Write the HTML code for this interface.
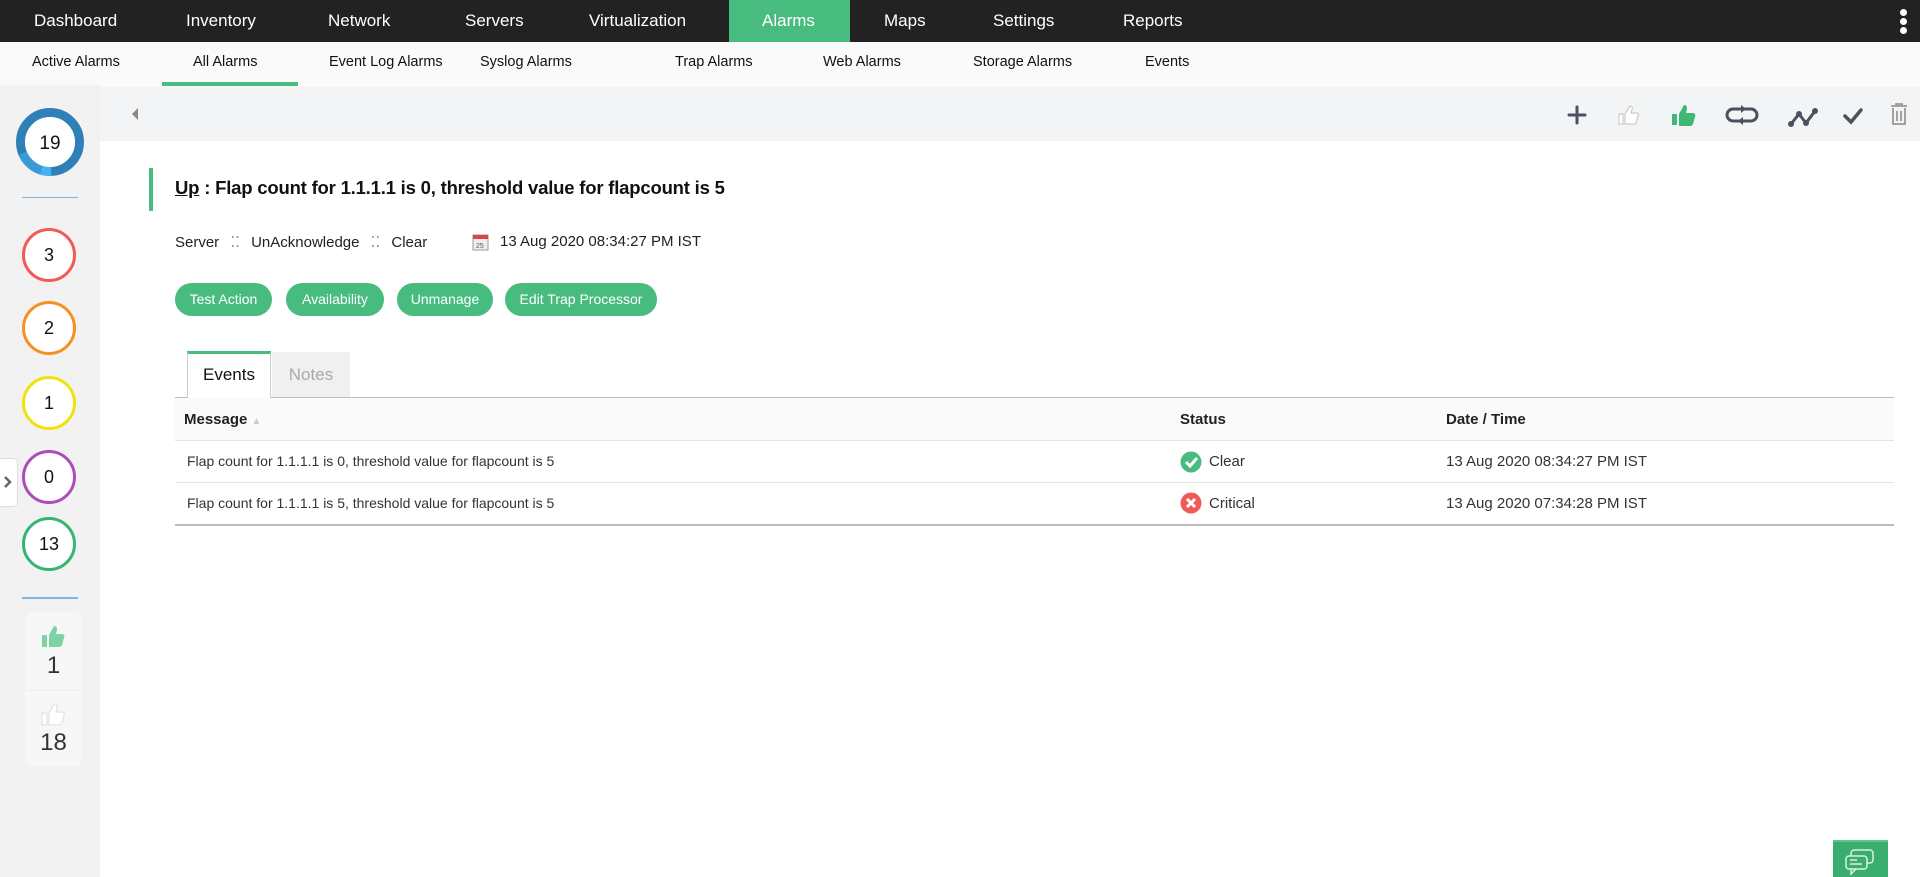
<!DOCTYPE html>
<html><head><meta charset="utf-8"><style>
*{margin:0;padding:0;box-sizing:border-box}
body{width:1920px;height:877px;overflow:hidden;font-family:"Liberation Sans",sans-serif;background:#fff;position:relative;color:#222}
.a{position:absolute;white-space:nowrap}
.top{left:0;top:0;width:1920px;height:42px;background:#222}
.tn{top:0;height:42px;line-height:42px;color:#fff;font-size:17px}
.sub{left:0;top:42px;width:1920px;height:43px;background:#fafafa}
.sn{top:42px;line-height:40px;font-size:14.5px;color:#111}
.side{left:0;top:85px;width:100px;height:792px;background:#f2f2f2}
.c{width:54px;height:54px;border-radius:50%;border:3px solid;background:#fff;text-align:center;line-height:48px;font-size:18px;left:22px;color:#111}
.btn{top:283px;height:33px;line-height:33px;background:#48bb7e;color:#fff;border-radius:17px;font-size:14px;text-align:center}
.th{font-weight:bold;font-size:15px;top:398px;line-height:43px;color:#222}
.td{font-size:14px;line-height:41px;color:#333}
</style></head><body>
<div class="a top"></div>
<div class="a" style="left:729px;top:0;width:121px;height:42px;background:#48bb7e"></div>
<div class="a tn" style="left:34px">Dashboard</div>
<div class="a tn" style="left:186px">Inventory</div>
<div class="a tn" style="left:328px">Network</div>
<div class="a tn" style="left:465px">Servers</div>
<div class="a tn" style="left:589px">Virtualization</div>
<div class="a tn" style="left:762px">Alarms</div>
<div class="a tn" style="left:884px">Maps</div>
<div class="a tn" style="left:993px">Settings</div>
<div class="a tn" style="left:1123px">Reports</div>
<div class="a" style="left:1900px;top:9px;width:7px;height:7px;border-radius:50%;background:#fff"></div>
<div class="a" style="left:1900px;top:18px;width:7px;height:7px;border-radius:50%;background:#fff"></div>
<div class="a" style="left:1900px;top:27px;width:7px;height:7px;border-radius:50%;background:#fff"></div>

<div class="a sub"></div>
<div class="a sn" style="left:32px">Active Alarms</div>
<div class="a sn" style="left:193px">All Alarms</div>
<div class="a" style="left:162px;top:82px;width:136px;height:4px;background:#48bb7e"></div>
<div class="a sn" style="left:329px">Event Log Alarms</div>
<div class="a sn" style="left:480px">Syslog Alarms</div>
<div class="a sn" style="left:675px">Trap Alarms</div>
<div class="a sn" style="left:823px">Web Alarms</div>
<div class="a sn" style="left:973px">Storage Alarms</div>
<div class="a sn" style="left:1145px">Events</div>

<div class="a" style="left:100px;top:86px;width:1820px;height:55px;background:#f3f4f5"></div>
<div class="a" style="left:132px;top:108px;width:0;height:0;border-top:6px solid transparent;border-bottom:6px solid transparent;border-right:6px solid #888"></div>

<svg class="a" style="left:1560px;top:98px" width="360" height="34" viewBox="1560 98 360 34">
<g stroke="#4a5260" stroke-width="3" fill="none" stroke-linecap="round">
<path d="M1577 107v16M1569 115h16"/>
<path d="M1742 109h9a6 6 0 0 1 0 12h-13M1742 121h-9a6 6 0 0 1 0-12h13"/>
<path d="M1791 124l8-10 7 9 9-12"/>
<path d="M1845 116l6 6 10-12" stroke-width="3.5"/>
</g>
<path d="M1741 105l5 4-5 4zM1743 125l-5-4 5-4z" fill="#4a5260"/>
<g fill="#4a5260"><circle cx="1791" cy="124" r="3"/><circle cx="1799" cy="114" r="3"/><circle cx="1806" cy="123" r="3"/><circle cx="1815" cy="111" r="3"/></g>
<path d="M1619 114h4v10h-4zM1625 114l5-8c2 0 3 1 2 4l-1 3h6c2 0 2 2 1 3l-2 7c0 1-1 1-2 1h-9z" fill="#fff" stroke="#ccc" stroke-width="1.2"/>
<path d="M1672 114h5v11h-5zM1679 114l5-9c3 0 3 2 3 4l-1 4h7c2 0 3 2 2 4l-2 7c-1 1-1 2-3 2h-11z" fill="#3fb873"/>
<g stroke="#999" stroke-width="1.8" fill="none"><path d="M1891 106h16M1896 106v-2h6v2M1893 108v16h12v-16M1897 111v10M1901 111v10"/></g>
</svg>

<div class="a side"></div>
<svg class="a" style="left:15px;top:107px" width="70" height="70" viewBox="0 0 70 70">
<circle cx="35" cy="35" r="29.5" fill="none" stroke="#2f80b6" stroke-width="9"/>
<circle cx="35" cy="35" r="29.5" fill="none" stroke="#3a9ad8" stroke-width="9" stroke-dasharray="26 300" stroke-dashoffset="-55"/>
<circle cx="35" cy="35" r="29.5" fill="none" stroke="#45b1f0" stroke-width="9" stroke-dasharray="10 300" stroke-dashoffset="-45"/>
<circle cx="35" cy="35" r="25" fill="#fff"/>
<text x="35" y="42" text-anchor="middle" font-size="19" font-family="Liberation Sans" fill="#111">19</text>
</svg>
<div class="a" style="left:22px;top:197px;width:56px;height:1px;background:#7fb6dc"></div>
<div class="a c" style="top:228px;border-color:#f25a5a">3</div>
<div class="a c" style="top:301px;border-color:#f6901e">2</div>
<div class="a c" style="top:376px;border-color:#f1e20c">1</div>
<div class="a c" style="top:450px;border-color:#ae4db8">0</div>
<div class="a c" style="top:517px;border-color:#35b670">13</div>
<div class="a" style="left:22px;top:597px;width:56px;height:2px;background:#7fb6dc"></div>
<div class="a" style="left:25px;top:612px;width:57px;height:155px;background:#f7f7f7;border-radius:8px"></div>
<div class="a" style="left:25px;top:690px;width:57px;height:1px;background:#eee"></div>
<svg class="a" style="left:40px;top:624px" width="26" height="26" viewBox="0 0 26 26"><path d="M2 11h5v12H2zM9 11l5-9c3 0 3 2 3 4l-1 4h6c2 0 3 2 2 4l-2 7c-1 1-1 2-3 2H9z" fill="#7dd3a4"/></svg>
<div class="a" style="left:25px;width:57px;text-align:center;top:652px;font-size:24px;color:#333">1</div>
<svg class="a" style="left:40px;top:702px" width="26" height="26" viewBox="0 0 26 26"><path d="M2 11h5v12H2zM9 11l5-9c3 0 3 2 3 4l-1 4h6c2 0 3 2 2 4l-2 7c-1 1-1 2-3 2H9z" fill="#fff" stroke="#ddd"/></svg>
<div class="a" style="left:25px;width:57px;text-align:center;top:729px;font-size:24px;color:#333">18</div>
<div class="a" style="left:0;top:458px;width:18px;height:49px;background:#fff;border:1px solid #ddd;border-left:none;border-radius:0 5px 5px 0"></div>
<svg class="a" style="left:2px;top:474px" width="12" height="16"><path d="M3 3l5 5-5 5" stroke="#666" stroke-width="2.5" fill="none"/></svg>

<div class="a" style="left:149px;top:168px;width:4px;height:43px;background:#48bb7e"></div>
<div class="a" style="left:175px;top:177px;font-size:18.5px;font-weight:600;color:#111;letter-spacing:-0.2px"><span style="text-decoration:underline">Up</span> : Flap count for 1.1.1.1 is 0, threshold value for flapcount is 5</div>
<div class="a" style="left:175px;top:233px;font-size:15px;color:#222">Server <span style="color:#888;margin:0 7px">⁚⁚</span> UnAcknowledge <span style="color:#888;margin:0 7px">⁚⁚</span> Clear</div>
<svg class="a" style="left:472px;top:232px" width="18" height="20"><rect x="1" y="3" width="15" height="15" fill="#eee" stroke="#999"/><rect x="1" y="3" width="15" height="4" fill="#d44"/><text x="4" y="16" font-size="7" fill="#555">25</text></svg>
<div class="a" style="left:500px;top:233px;font-size:15px;color:#222">13 Aug 2020 08:34:27 PM IST</div>

<div class="a btn" style="left:175px;width:97px">Test Action</div>
<div class="a btn" style="left:286px;width:98px">Availability</div>
<div class="a btn" style="left:397px;width:96px">Unmanage</div>
<div class="a btn" style="left:505px;width:152px">Edit Trap Processor</div>

<div class="a" style="left:175px;top:397px;width:1719px;height:1px;background:#bbb"></div>
<div class="a" style="left:187px;top:351px;width:84px;height:47px;background:#fff;border:1px solid #ccc;border-top:3px solid #48bb7e;border-bottom:none;text-align:center;line-height:42px;font-size:17px;color:#111">Events</div>
<div class="a" style="left:272px;top:352px;width:78px;height:45px;background:#f0f0f0;text-align:center;line-height:45px;font-size:17px;color:#aaa">Notes</div>
<div class="a" style="left:175px;top:398px;width:1719px;height:43px;background:#fafafa;border-bottom:1px solid #e4e4e4"></div>
<div class="a th" style="left:184px">Message <span style="color:#ccc;font-size:10px">▲</span></div>
<div class="a th" style="left:1180px">Status</div>
<div class="a th" style="left:1446px">Date / Time</div>
<div class="a" style="left:175px;top:482px;width:1719px;height:1px;background:#e4e4e4"></div>
<div class="a" style="left:175px;top:524px;width:1719px;height:2px;background:#bbb"></div>
<div class="a td" style="left:187px;top:441px">Flap count for 1.1.1.1 is 0, threshold value for flapcount is 5</div>
<div class="a td" style="left:187px;top:483px">Flap count for 1.1.1.1 is 5, threshold value for flapcount is 5</div>
<svg class="a" style="left:1180px;top:451px" width="22" height="22"><circle cx="11" cy="11" r="10.5" fill="#48bb7e"/><path d="M6 11l4 4 7-8" stroke="#fff" stroke-width="3" fill="none"/></svg>
<svg class="a" style="left:1180px;top:492px" width="22" height="22"><circle cx="11" cy="11" r="10.5" fill="#f25a5a"/><path d="M7 7l8 8M15 7l-8 8" stroke="#fff" stroke-width="3"/></svg>
<div class="a td" style="left:1209px;top:441px;font-size:15px">Clear</div>
<div class="a td" style="left:1209px;top:483px;font-size:15px">Critical</div>
<div class="a td" style="left:1446px;top:441px;font-size:15px">13 Aug 2020 08:34:27 PM IST</div>
<div class="a td" style="left:1446px;top:483px;font-size:15px">13 Aug 2020 07:34:28 PM IST</div>

<div class="a" style="left:1833px;top:840px;width:55px;height:37px;background:#3aae6e;border-top:2px solid #5fc48c"></div>
<svg class="a" style="left:1845px;top:848px" width="32" height="29"><g stroke="#d8f2e2" stroke-width="1.5" fill="none"><rect x="6" y="2" width="22" height="13" rx="3"/><rect x="1" y="8" width="21" height="13" rx="3" fill="#3aae6e"/><path d="M6 21l0 5 5-5"/><path d="M5 12h7M5 16h12"/></g></svg>
</body></html>
